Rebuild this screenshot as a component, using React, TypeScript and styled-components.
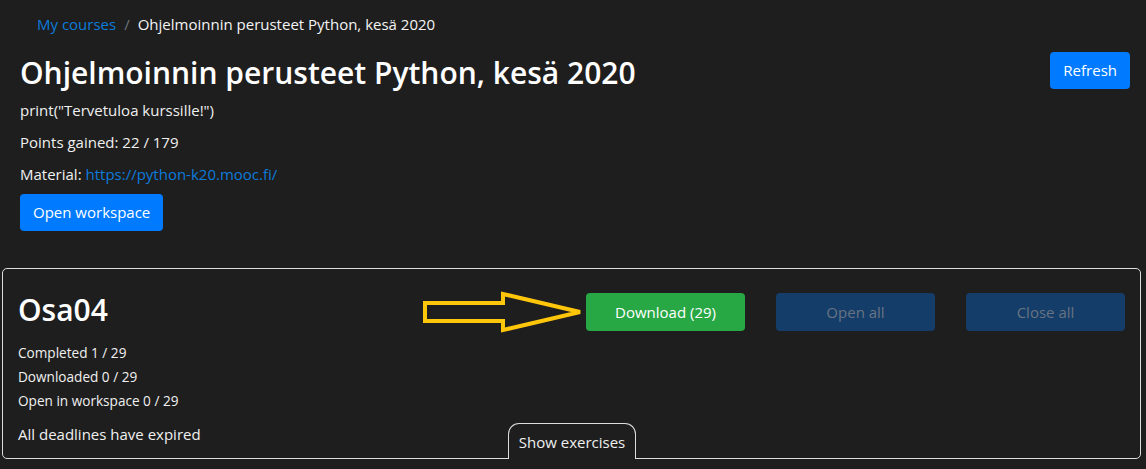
import React from "react";
import styled, { createGlobalStyle } from "styled-components";

const GlobalStyle = createGlobalStyle`
  html, body {
    margin: 0;
    padding: 0;
    background: #1e1e1e;
    color: #f0f0f0;
    font-family: "Open Sans", "Noto Sans", sans-serif;
    font-size: 15px;
  }
  * { box-sizing: border-box; }
`;

const Page = styled.div`
  width: 1146px;
  height: 469px;
  overflow: hidden;
  background: #1e1e1e;
`;

const Breadcrumb = styled.nav`
  display: flex;
  align-items: center;
  gap: 8px;
  padding: 12px 16px 12px 37px;
  font-size: 15px;
  line-height: 24px;
`;

const CrumbLink = styled.a`
  color: #0d7bdc;
  text-decoration: none;
`;

const CrumbSep = styled.span`
  color: #6c757d;
`;

const CrumbCurrent = styled.span`
  color: #f4f4f4;
`;

const Header = styled.section`
  padding: 0 16px 0 20px;
`;

const TitleRow = styled.div`
  display: flex;
  justify-content: space-between;
  align-items: flex-start;
`;

const Title = styled.h1`
  margin: 6px 0 0;
  font-size: 30px;
  font-weight: 600;
  line-height: 38px;
  color: #ffffff;
`;

const Button = styled.button<{ $variant: "primary" | "success" | "muted"; $wide?: boolean }>`
  font-family: inherit;
  font-size: 15px;
  line-height: 21px;
  border: none;
  border-radius: 4px;
  padding: 8px 12px;
  cursor: pointer;
  color: ${(p) => (p.$variant === "muted" ? "#687483" : "#ffffff")};
  background: ${(p) =>
    p.$variant === "primary" ? "#007bff" : p.$variant === "success" ? "#28a745" : "#143d69"};
  width: ${(p) => (p.$wide ? "159px" : "auto")};
`;

const RefreshButton = styled(Button)`
  margin-top: 4px;
  height: 37px;
  padding: 0 13px;
`;

const InfoLine = styled.p`
  margin: 0 0 11px;
  font-size: 15px;
  line-height: 21px;
`;

const Lead = styled(InfoLine)`
  margin-top: 8px;
`;

const LastLine = styled(InfoLine)`
  margin-bottom: 9px;
`;

const Link = styled.a`
  color: #0d7bdc;
  text-decoration: none;
`;

const WorkspaceButton = styled(Button)`
  height: 37px;
  padding: 0 13px;
`;

const Card = styled.section`
  position: relative;
  margin: 37px 5px 0 2px;
  height: 191px;
  border: 1px solid #dcdcdc;
  border-radius: 5px;
  padding: 0 15px;
  display: flex;
  flex-direction: column;
`;

const CardTop = styled.div`
  display: flex;
  justify-content: space-between;
  align-items: flex-start;
`;

const PartTitle = styled.h2`
  margin: 20px 0 0;
  font-size: 30px;
  font-weight: 600;
  line-height: 42px;
  color: #ffffff;
`;

const ButtonGroup = styled.div`
  display: flex;
  gap: 31px;
  margin: 24px 0 0;
`;

const ActionButton = styled(Button)`
  height: 38px;
  padding: 0;
`;

const Stats = styled.div`
  margin-top: 10px;
  display: flex;
  flex-direction: column;
`;

const StatLine = styled.div`
  font-size: 13.6px;
  line-height: 24px;
`;

const Deadline = styled.div`
  margin-top: 11px;
  font-size: 15px;
  line-height: 21px;
`;

const ShowTab = styled.button`
  position: absolute;
  left: 505px;
  bottom: -1px;
  width: 128px;
  height: 36px;
  background: #1e1e1e;
  color: #f0f0f0;
  border: 1px solid #dcdcdc;
  border-bottom: none;
  border-radius: 11px 11px 0 0;
  font-family: inherit;
  font-size: 15px;
  padding: 0;
`;

const ArrowMark = styled.svg`
  position: absolute;
  left: 417px;
  top: 20px;
`;

export default function App() {
  return (
    <Page>
      <GlobalStyle />
      <Breadcrumb>
        <CrumbLink href="#">My courses</CrumbLink>
        <CrumbSep>/</CrumbSep>
        <CrumbCurrent>Ohjelmoinnin perusteet Python, kesä 2020</CrumbCurrent>
      </Breadcrumb>
      <Header>
        <TitleRow>
          <Title>Ohjelmoinnin perusteet Python, kesä 2020</Title>
          <RefreshButton $variant="primary">Refresh</RefreshButton>
        </TitleRow>
        <Lead>print("Tervetuloa kurssille!")</Lead>
        <InfoLine>Points gained: 22 / 179</InfoLine>
        <LastLine>
          Material: <Link href="#">https://python-k20.mooc.fi/</Link>
        </LastLine>
        <WorkspaceButton $variant="primary">Open workspace</WorkspaceButton>
      </Header>
      <Card>
        <CardTop>
          <PartTitle>Osa04</PartTitle>
          <ButtonGroup>
            <ActionButton $variant="success" $wide>Download (29)</ActionButton>
            <ActionButton $variant="muted" $wide disabled>Open all</ActionButton>
            <ActionButton $variant="muted" $wide disabled>Close all</ActionButton>
          </ButtonGroup>
        </CardTop>
        <Stats>
          <StatLine>Completed 1 / 29</StatLine>
          <StatLine>Downloaded 0 / 29</StatLine>
          <StatLine>Open in workspace 0 / 29</StatLine>
        </Stats>
        <Deadline>All deadlines have expired</Deadline>
        <ArrowMark width="170" height="46" viewBox="0 0 170 46">
          <path
            d="M5 14 H83 V5 L160 23 L83 41 V32 H5 Z"
            fill="none"
            stroke="#ffc60a"
            strokeWidth="4"
            strokeLinejoin="miter"
          />
        </ArrowMark>
        <ShowTab>Show exercises</ShowTab>
      </Card>
    </Page>
  );
}
